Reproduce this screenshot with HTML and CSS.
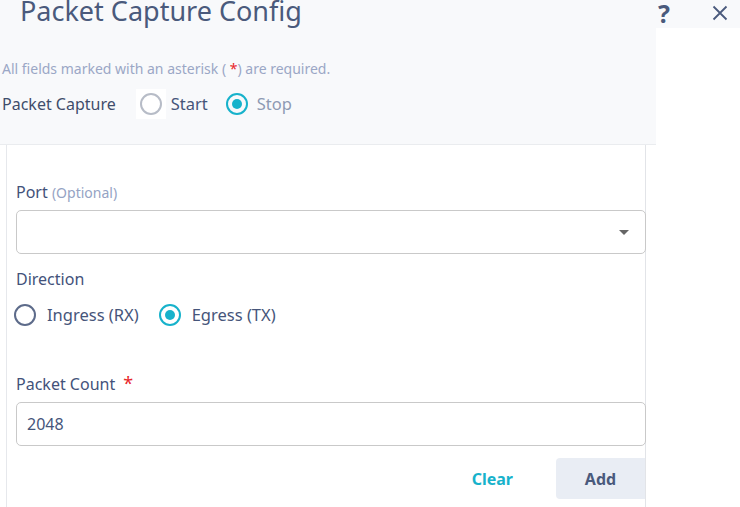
FILE: index.html
```html
<!DOCTYPE html>
<html lang="en">
  <head>
    <meta charset="UTF-8" />
    <title>Packet Capture Config</title>
    <link rel="stylesheet" href="styles.css">
  </head>
  <body>
    <div class="header">
      <h1 class="title">Packet Capture Config</h1>
      <div class="header-actions">
        <span class="help">?</span>
        <svg class="close" width="16" height="16" viewBox="0 0 16 16">
          <path d="M1.5 1.5 L14.5 14.5 M14.5 1.5 L1.5 14.5" stroke="#4a5a7c" stroke-width="1.8" fill="none" />
        </svg>
      </div>
    </div>

    <div class="top-panel">
      <p class="required-note">All fields marked with an asterisk ( <span class="star">*</span>) are required.</p>
      <div class="capture-row">
        <span class="capture-label">Packet Capture</span>
        <label class="radio"><span class="dot-box"><span class="dot"></span></span><span>Start</span></label>
        <label class="radio checked muted"><span class="dot"></span><span>Stop</span></label>
      </div>
    </div>

    <div class="card">
      <div class="field">
        <div class="label">Port <span class="optional">(Optional)</span></div>
        <div class="select">
          <svg width="12" height="8" viewBox="0 0 12 8"><path d="M1 2 L11 2 L6 7 Z" fill="#666" /></svg>
        </div>
      </div>

      <div class="field">
        <div class="label">Direction</div>
        <div class="radio-group">
          <label class="radio dark"><span class="dot"></span><span>Ingress (RX)</span></label>
          <label class="radio checked"><span class="dot"></span><span>Egress (TX)</span></label>
        </div>
      </div>

      <div class="field count-field">
        <div class="label">Packet Count <span class="star big">*</span></div>
        <div class="input">2048</div>
      </div>

      <div class="actions">
        <button class="btn-clear">Clear</button>
        <button class="btn-add">Add</button>
      </div>
    </div>
  </body>
</html>
```

FILE: styles.css
```css
body {
  margin: 0;
  font-family: 'Noto Sans', 'Open Sans', sans-serif;
  color: #3f4d6b;
  background-color: #fff;
}

.header {
  display: flex;
  justify-content: space-between;
  align-items: center;
  height: 28px;
  background-color: #f8f9fb;
}

.title {
  margin: 0;
  padding-left: 20px;
  font-size: 27px;
  font-weight: normal;
  color: #4a5a7c;
  line-height: 28px;
  margin-top: -6px;
}

.header-actions {
  display: flex;
  align-items: center;
  gap: 42px;
  padding-right: 12px;
}

.help {
  font-size: 25px;
  font-weight: bold;
  color: #4a5a7c;
  line-height: 28px;
  margin-top: -2px;
}

.close {
  margin-top: -2px;
}

.top-panel {
  width: 656px;
  height: 117px;
  background-color: #f8f9fb;
  border-bottom: 1px solid #eaecef;
  box-sizing: border-box;
}

.required-note {
  margin: 0;
  padding: 32px 0 0 2px;
  font-size: 14px;
  line-height: 18px;
  color: #9ba7c6;
}

.star {
  color: #e8262b;
}

.star.big {
  font-size: 18px;
  margin-left: 4px;
}

.capture-row {
  display: flex;
  align-items: center;
  margin-top: 14px;
  padding-left: 2px;
  font-size: 16px;
}

.capture-label {
  margin-right: 24px;
}

.radio {
  display: inline-flex;
  align-items: center;
  gap: 9px;
  font-size: 16.5px;
  margin-right: 18px;
  color: #46557a;
}

.radio .dot {
  width: 18px;
  height: 18px;
  border: 2px solid #b7bcc7;
  border-radius: 50%;
  box-sizing: content-box;
  display: inline-block;
  position: relative;
}

.dot-box {
  display: inline-flex;
  background-color: #fff;
  padding: 4px;
  margin: -4px;
}

.radio.dark .dot {
  border-color: #5d6b8a;
}

.radio.checked .dot {
  border-color: #17b2cb;
}

.radio.checked .dot::after {
  content: '';
  position: absolute;
  left: 4px;
  top: 4px;
  width: 10px;
  height: 10px;
  border-radius: 50%;
  background-color: #17b2cb;
}

.radio.muted {
  color: #8e9ab3;
}

.card {
  width: 640px;
  margin-left: 6px;
  border-left: 1px solid #e6e8ec;
  border-right: 1px solid #e2e4e8;
  box-sizing: border-box;
  padding: 35px 0 0 9px;
  height: 362px;
}

.label {
  font-size: 16px;
  line-height: 24px;
  color: #43527a;
}

.optional {
  font-size: 14px;
  color: #95a3c4;
}

.select,
.input {
  width: 630px;
  height: 44px;
  border: 1px solid #c9c9c9;
  border-radius: 5px;
  box-sizing: border-box;
  display: flex;
  align-items: center;
}

.select {
  margin-top: 5px;
  justify-content: flex-end;
  padding-right: 15px;
}

.input {
  margin-top: 6px;
  padding-left: 10px;
  font-size: 16px;
  color: #46557a;
}

.field + .field {
  margin-top: 13px;
}

.radio-group {
  display: flex;
  margin-top: 12px;
  margin-left: -2px;
}

.radio-group .radio {
  gap: 11px;
  margin-right: 20px;
}

.count-field {
  margin-top: 45px !important;
}

.actions {
  display: flex;
  justify-content: flex-end;
  align-items: center;
  margin-top: 12px;
  gap: 43px;
}

button {
  font-family: inherit;
  font-size: 16px;
  font-weight: bold;
  border: none;
  cursor: pointer;
}

.btn-clear {
  background: none;
  color: #17b2cb;
  padding: 0;
}

.btn-add {
  width: 89px;
  height: 41px;
  background-color: #e9edf4;
  color: #4a5a7c;
  border-radius: 4px 0 0 4px;
}
```
